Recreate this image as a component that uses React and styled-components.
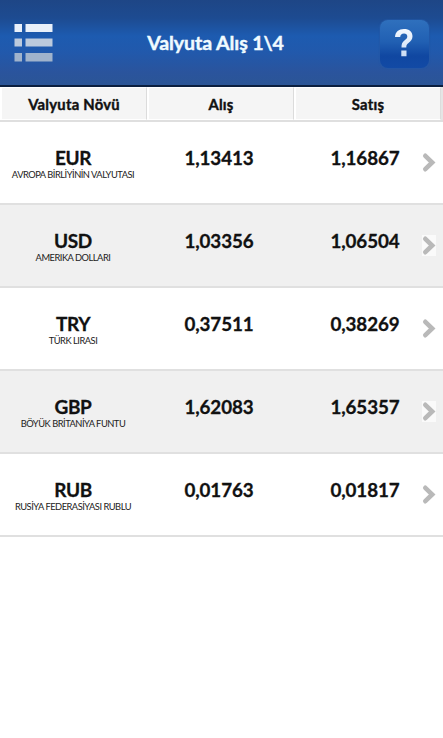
import React from "react";
import styled, { createGlobalStyle } from "styled-components";

const GlobalStyle = createGlobalStyle`
  * { box-sizing: border-box; }
  body { margin: 0; background: #fff; font-family: Lato, "Open Sans", sans-serif; color: #111; }
`;

const Screen = styled.main`
  width: 443px;
  height: 738px;
  background: #fff;
  overflow: hidden;
`;

const TopBar = styled.header`
  height: 87px;
  display: grid;
  grid-template-columns: 53px 1fr 65px;
  align-items: center;
  padding: 0 14px;
  background: linear-gradient(#1e4686 0, #1d4b91 18px, #1d5bb0 36px, #2159ac 52px, #2a549d 72px, #2b5597 84px);
  border-bottom: 2px solid #0b1f3f;
`;

const IconButton = styled.button`
  display: flex;
  padding: 0;
  border: 0;
  background: none;
`;

const HelpButton = styled(IconButton)`
  width: 49px;
  height: 48px;
  margin: 2px 0 0;
  padding: 0 2px 2px 0;
  justify-self: end;
  align-items: center;
  justify-content: center;
  border-radius: 8px;
  background: linear-gradient(#2f70bd, #2160b3 45%, #1047a1 75%, #124aa5);
  box-shadow: 0 0 1px 1px rgba(36, 89, 166, 0.7);
`;

const Title = styled.h1`
  margin: 1px 0 0;
  text-align: center;
  font-size: 19.6px;
  line-height: 24px;
  font-weight: 700;
  letter-spacing: -0.1px;
  -webkit-text-stroke: 0.4px #f0fbff;
  color: #f0fbff;
  white-space: nowrap;
`;

const HeadRow = styled.div`
  display: grid;
  grid-template-columns: 147px 147px 147px 2px;
  height: 35px;
  border-bottom: 2px solid #dfdfdf;
  background: #e5e5e5;
`;

const HeadCell = styled.div`
  height: 33px;
  border: 1px solid #fff;
  border-left-width: 2px;
  border-right: 1px solid #dcdcdc;
  background: #f5f5f5;
  text-align: center;
  font-size: 14.8px;
  line-height: 33px;
  font-weight: 700;
  letter-spacing: 0.25px;
  -webkit-text-stroke: 0.4px #111;
`;

const Row = styled.div`
  display: grid;
  grid-template-columns: 146px 146px 146px 5px;
  height: 83px;
  padding-top: 25px;
  border-bottom: 2px solid #e0e0e0;
  background: ${(p) => (p.$shaded ? "#f0f0f0" : "#fff")};
`;

const Currency = styled.div`
  text-align: center;
`;

const Code = styled.div`
  font-size: 19px;
  line-height: 22px;
  font-weight: 700;
  letter-spacing: -0.4px;
  -webkit-text-stroke: 0.3px #111;
`;

const Name = styled.div`
  margin-top: 1px;
  font-size: 9.3px;
  line-height: 10px;
  letter-spacing: -0.48px;
  color: #222;
  white-space: nowrap;
`;

const Rate = styled.div`
  text-align: center;
  font-size: 18.8px;
  line-height: 22px;
  font-weight: 700;
  letter-spacing: -0.1px;
  -webkit-text-stroke: 0.3px #111;
`;

const Arrow = styled.svg`
  display: block;
  margin: 5px 0 0 -16px;
  background: ${(p) => (p.$shaded ? "#fafafa" : "none")};
`;

const rates = [
  { code: "EUR", name: "AVROPA BİRLİYİNİN VALYUTASI", buy: "1,13413", sell: "1,16867" },
  { code: "USD", name: "AMERIKA DOLLARI", buy: "1,03356", sell: "1,06504" },
  { code: "TRY", name: "TÜRK LIRASI", buy: "0,37511", sell: "0,38269" },
  { code: "GBP", name: "BÖYÜK BRİTANİYA FUNTU", buy: "1,62083", sell: "1,65357" },
  { code: "RUB", name: "RUSİYA FEDERASİYASI RUBLU", buy: "0,01763", sell: "0,01817" },
];

function ListIcon() {
  return (
    <svg width="39" height="40" viewBox="0 0 39 40">
      <path fill="#e9f0fa" d="M0.500 1h7.500v8H0.500zM11.500 1h27v8h-27z" />
      <path fill="#bccadd" d="M0.500 15.500h7.500v8H0.500zM11.500 15.500h27v8h-27z" />
      <path fill="#a0b3cc" d="M0.500 30h7.500v8.500H0.500zM11.500 30h27v8.500h-27z" />
    </svg>
  );
}

function HelpIcon() {
  return (
    <svg width="20" height="30" viewBox="0 0 20 30">
      <defs>
        <linearGradient id="helpFill" x1="0" y1="0" x2="0" y2="1">
          <stop offset="0" stopColor="#f4f9ff" />
          <stop offset="1" stopColor="#cbdcf3" />
        </linearGradient>
      </defs>
      <path
        fill="url(#helpFill)"
        d="M1 9C1.300 3.800 4.800 1 10 1s8.500 2.700 8.500 7.300c0 3-1.500 4.800-4 6.700-1.900 1.500-2.200 2.300-2.200 4.500H7.500c-.1-3.600.7-5.300 3.200-7.300 1.800-1.400 2.600-2.200 2.600-3.800 0-1.900-1.200-3-3.300-3C7.600 5.400 6.400 6.700 6.200 9zM7.300 22.500h5.200v5.800H7.300z"
      />
    </svg>
  );
}

function RowArrow({ shaded }) {
  return (
    <Arrow $shaded={shaded} width="14" height="21" viewBox="0 0 14 21">
      <path d="M3.300 3.800L10.200 10.500L3.300 17.200" fill="none" stroke="#b9b9b9" strokeWidth="4.600" strokeLinecap="round" />
    </Arrow>
  );
}

export default function App() {
  return (
    <>
      <GlobalStyle />
      <Screen>
        <TopBar>
          <IconButton aria-label="Menyu"><ListIcon /></IconButton>
          <Title>Valyuta Alış 1\4</Title>
          <HelpButton aria-label="Kömək"><HelpIcon /></HelpButton>
        </TopBar>
        <HeadRow>
          <HeadCell>Valyuta Növü</HeadCell>
          <HeadCell>Alış</HeadCell>
          <HeadCell>Satış</HeadCell>
        </HeadRow>
        {rates.map((r, i) => (
          <Row key={r.code} $shaded={i % 2 === 1}>
            <Currency>
              <Code>{r.code}</Code>
              <Name>{r.name}</Name>
            </Currency>
            <Rate>{r.buy}</Rate>
            <Rate>{r.sell}</Rate>
            <RowArrow shaded={i % 2 === 1} />
          </Row>
        ))}
      </Screen>
    </>
  );
}
